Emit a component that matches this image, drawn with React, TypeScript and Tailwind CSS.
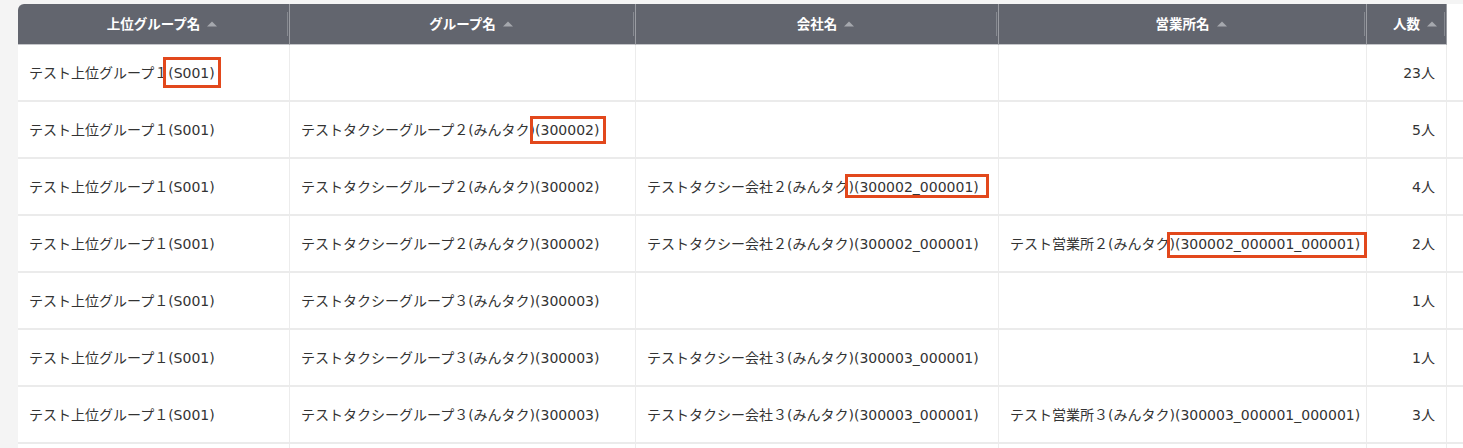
type Row = {
  top: string;
  group: string;
  company: string;
  office: string;
  count: string;
  mark?: { col: number; split: number; box: string };
};

const grid = "grid grid-cols-[272px_346px_363px_368px_80px_1fr]";

const rows: Row[] = [
  { top: "テスト上位グループ１(S001)", group: "", company: "", office: "", count: "23人", mark: { col: 0, split: 10, box: "-left-[5px] -right-[6px] -top-[7px] -bottom-[6px]" } },
  { top: "テスト上位グループ１(S001)", group: "テストタクシーグループ２(みんタク)(300002)", company: "", office: "", count: "5人", mark: { col: 1, split: 19, box: "-left-[11px] -right-[7px] -top-[5px] -bottom-[5px]" } },
  { top: "テスト上位グループ１(S001)", group: "テストタクシーグループ２(みんタク)(300002)", company: "テストタクシー会社２(みんタク)(300002_000001)", office: "", count: "4人", mark: { col: 2, split: 16, box: "-left-[9px] -right-[10px] -top-[4px] -bottom-[2px]" } },
  { top: "テスト上位グループ１(S001)", group: "テストタクシーグループ２(みんタク)(300002)", company: "テストタクシー会社２(みんタク)(300002_000001)", office: "テスト営業所２(みんタク)(300002_000001_000001)", count: "2人", mark: { col: 3, split: 13, box: "-left-[8px] -right-[7px] -top-[3px] -bottom-[5px]" } },
  { top: "テスト上位グループ１(S001)", group: "テストタクシーグループ３(みんタク)(300003)", company: "", office: "", count: "1人" },
  { top: "テスト上位グループ１(S001)", group: "テストタクシーグループ３(みんタク)(300003)", company: "テストタクシー会社３(みんタク)(300003_000001)", office: "", count: "1人" },
  { top: "テスト上位グループ１(S001)", group: "テストタクシーグループ３(みんタク)(300003)", company: "テストタクシー会社３(みんタク)(300003_000001)", office: "テスト営業所３(みんタク)(300003_000001_000001)", count: "3人" },
];

const headers = ["上位グループ名", "グループ名", "会社名", "営業所名", "人数"];

function HeaderCell({ label, first }: { label: string; first?: boolean }) {
  return (
    <div
      className={
        "relative flex h-[41px] items-center justify-center border-b border-r border-b-[#c5c6ca] border-r-[#9a9ca2] bg-[#62656e] " +
        (first ? "rounded-tl-[6px]" : "")
      }
    >
      <span className="relative text-[13.5px] font-bold leading-[18px] text-white">
        {label}
        <span className="absolute left-full top-1/2 ml-[7px] h-0 w-0 -translate-y-1/2 border-x-[5px] border-b-[5px] border-x-transparent border-b-[#a5a8ae]" />
      </span>
      <span className="absolute right-[1px] top-[8px] h-[24px] w-px bg-[#878a91]" />
    </div>
  );
}

function Cell({ text, mark }: { text: string; mark?: { split: number; box: string } }) {
  return (
    <div className="flex h-[57px] items-center border-b-2 border-r border-b-[#ebebeb] border-r-[#ececec] pl-[11px] whitespace-nowrap">
      {mark ? (
        <span>
          {text.slice(0, mark.split)}
          <span className="relative inline-block leading-[18px]">
            {text.slice(mark.split)}
            <span className={"pointer-events-none absolute border-[3px] border-[#e2481c] " + mark.box} />
          </span>
        </span>
      ) : (
        <span>{text}</span>
      )}
    </div>
  );
}

export default function App() {
  return (
    <div className="h-[448px] overflow-hidden bg-[#f4f4f4] pl-[18px] pt-[4px] font-['DejaVu_Sans','Noto_Sans_CJK_JP',sans-serif]">
      <div className="h-full rounded-tl-[6px] bg-white text-[14px] leading-[18px] text-[#333333]">
        <div className={grid}>
          {headers.map((h, i) => (
            <HeaderCell key={h} label={h} first={i === 0} />
          ))}
          <div className="h-[41px]" />
        </div>
        {rows.map((r, i) => {
          const cells = [r.top, r.group, r.company, r.office];
          return (
            <div key={i} className={grid}>
              {cells.map((c, j) => (
                <Cell key={j} text={c} mark={r.mark && r.mark.col === j ? r.mark : undefined} />
              ))}
              <div className="flex h-[57px] items-center justify-end border-b-2 border-r border-b-[#ebebeb] border-r-[#ececec] pr-[11px]">
                {r.count}
              </div>
              <div className="h-[57px] border-b-2 border-b-[#ebebeb]" />
            </div>
          );
        })}
        <div className={grid}>
          {[0, 1, 2, 3, 4].map((k) => (
            <div key={k} className="h-[57px] border-r border-r-[#ececec]" />
          ))}
          <div />
        </div>
      </div>
    </div>
  );
}
